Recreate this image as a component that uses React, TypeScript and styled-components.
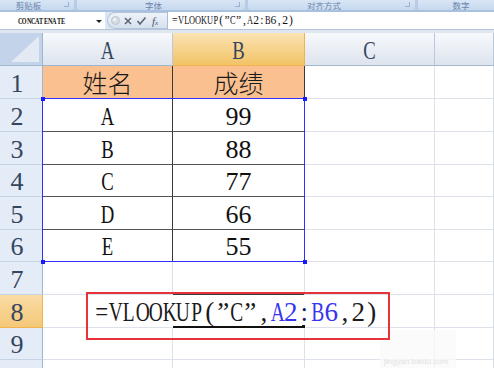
import React from 'react';
import styled, { createGlobalStyle } from 'styled-components';

const GlobalStyle = createGlobalStyle`
  html, body { margin: 0; padding: 0; background: #fff; }
  body { width: 494px; height: 368px; overflow: hidden; font-family: "Liberation Serif", "Noto Sans CJK SC", serif; }
`;

const Page = styled.div`
  position: relative;
  width: 494px;
  height: 368px;
  overflow: hidden;
  display: flex;
  flex-direction: column;
  background: #fff;
  & > * { flex-shrink: 0; }
`;

/* ribbon group captions */
const Ribbon = styled.div`
  display: flex;
  gap: 3px;
  height: 10px;
  background: #b8cce6;
  border-bottom: 2px solid #a9c0de;
  overflow: hidden;
`;
const Group = styled.div<{ $w: number; $ml?: number }>`
  position: relative;
  flex: 0 0 ${(p) => p.$w}px;
  margin-left: ${(p) => p.$ml || 0}px;
  padding-right: 15px;
  box-sizing: border-box;
  display: flex;
  align-items: center;
  justify-content: center;
  background: linear-gradient(#d8e5f5, #c7d9ef);
  border-radius: 0 0 3px 3px;
  font: 8.5px/10px "Noto Sans CJK SC", sans-serif;
  color: #6a84ac;
`;
const Launcher = styled.span`
  position: absolute;
  right: 5px;
  top: 2px;
  width: 4px;
  height: 4px;
  border-right: 1px solid #9cb1cf;
  border-bottom: 1px solid #9cb1cf;
`;

/* formula bar */
const FormulaBar = styled.div`
  display: flex;
  height: 17px;
  background: #dbe6f3;
`;
const NameBox = styled.div`
  position: relative;
  width: 105px;
  background: #fff;
  display: flex;
  align-items: center;
  padding-left: 18px;
  box-sizing: border-box;
  font-size: 8.6px;
  font-weight: bold;
  color: #111;
`;
const Arrow = styled.span`
  position: absolute;
  right: 3px;
  top: 8px;
  border-left: 3px solid transparent;
  border-right: 3px solid transparent;
  border-top: 3px solid #222;
`;
const Pill = styled.div`
  margin-left: 2px;
  width: 60px;
  display: flex;
  align-items: center;
  gap: 3px;
  padding-left: 3px;
  box-sizing: border-box;
  background: linear-gradient(#eef3f9, #d6e1ee);
  border: 1px solid #b3c5dc;
  border-right: none;
  border-radius: 9px 0 0 9px;
`;
const Fx = styled.span`
  font: italic 11px "Liberation Serif", serif;
  color: #4b5766;
  margin-left: 2px;
  small { font-size: 7px; }
`;
const FormulaInput = styled.div`
  flex: 1;
  background: #fff;
  border-left: 1px solid #a9bcd5;
  display: flex;
  align-items: center;
  padding-left: 4px;
  font-size: 11.6px;
  color: #111;
`;
const Band = styled.div`
  height: 4px;
  background: #dfe6ef;
  border-top: 1px solid #b4c5da;
  box-sizing: border-box;
`;

/* sheet */
const heights = [33, 33, 33, 32, 33, 32, 33, 33, 32, 33];

const Sheet = styled.div`
  display: grid;
  grid-template-columns: 43px 130px 132px 130px 1fr;
  grid-template-rows: 33px ${heights.map((h) => h + 'px').join(' ')};
`;
const Corner = styled.div`
  grid-row: 1;
  grid-column: 1;
  position: relative;
  background: #c3d3e9;
  border-right: 1px solid #9eb6ce;
  border-bottom: 1px solid #9eb6ce;
  &::after {
    content: '';
    position: absolute;
    right: 3px;
    bottom: 3px;
    width: 28px;
    height: 26px;
    background: #e3eaf4;
    clip-path: polygon(100% 0, 100% 100%, 0 100%);
  }
`;
const ColHead = styled.div<{ $c: number; $on?: boolean }>`
  grid-row: 1;
  grid-column: ${(p) => p.$c};
  display: flex;
  align-items: center;
  justify-content: center;
  padding-top: 3px;
  box-sizing: border-box;
  font-size: 26px;
  color: #34455e;
  background: ${(p) => (p.$on ? 'linear-gradient(#fbe3b3, #f2c366)' : 'linear-gradient(#f7f9fc, #dde4ee)')};
  border-right: 1px solid ${(p) => (p.$on ? '#f1b34e' : '#b9c8db')};
  border-bottom: 1px solid ${(p) => (p.$on ? '#f1b34e' : '#9eb6ce')};
`;
const RowHead = styled.div<{ $r: number; $on?: boolean }>`
  grid-row: ${(p) => p.$r};
  grid-column: 1;
  display: flex;
  align-items: center;
  justify-content: center;
  padding: 3px 8px 0 0;
  box-sizing: border-box;
  font-size: 26px;
  color: #34455e;
  background: ${(p) => (p.$on ? 'linear-gradient(#fadca6, #f4c878)' : '#e4ecf7')};
  border-right: 1px solid ${(p) => (p.$on ? '#f1b34e' : '#9eb6ce')};
  border-bottom: 1px solid ${(p) => (p.$on ? '#f1b34e' : '#c5d3e5')};
`;
const Cell = styled.div<{ $r: number; $c: number; $bg?: string; $dark?: boolean; $open?: boolean; $sel?: boolean }>`
  grid-row: ${(p) => p.$r};
  grid-column: ${(p) => p.$c};
  position: relative;
  display: flex;
  align-items: center;
  justify-content: center;
  padding-top: 3px;
  box-sizing: border-box;
  font-size: 26px;
  color: #111;
  background: ${(p) => p.$bg || '#fff'};
  border-right: 1px solid ${(p) => (p.$open ? 'transparent' : p.$dark ? '#3a3a3a' : '#dde2ea')};
  border-bottom: 1px solid ${(p) => (p.$dark ? '#555' : '#dde2ea')};
  ${(p) =>
    p.$sel &&
    `
    margin-top: -2px;
    border-top: 2px solid #3d3d3d;
    border-bottom: 2px solid #111;
    &::after {
      content: '';
      position: absolute;
      right: -2px;
      bottom: -3px;
      width: 4px;
      height: 4px;
      background: #111;
    }
  `}
`;
const CnText = styled.span`
  font: 300 25px "Noto Sans CJK SC", sans-serif;
  color: #1a1a1a;
  margin-top: -4px;
`;
const Range = styled.div`
  grid-row: 3 / 8;
  grid-column: 2 / 4;
  position: relative;
  margin: -1px 0 0 -1px;
  border: 1px solid #2f2fff;
  z-index: 2;
  pointer-events: none;
`;
const Handle = styled.span<{ $top: boolean; $left: boolean }>`
  position: absolute;
  width: 4px;
  height: 4px;
  background: #1a1aff;
  ${(p) => (p.$top ? 'top: -2px;' : 'bottom: -3px;')}
  ${(p) => (p.$left ? 'left: -2px;' : 'right: -3px;')}
`;

/* annotation */
const Callout = styled.div`
  position: absolute;
  left: 86px;
  top: 292px;
  width: 304px;
  height: 48px;
  box-sizing: border-box;
  border: 2px solid #e5333a;
  padding-left: 7px;
  font-size: 27px;
  line-height: 36px;
  white-space: nowrap;
  color: #1b1b1b;
  z-index: 3;
`;
const Watermark = styled.div`
  position: absolute;
  left: 380px;
  top: 330px;
  width: 76px;
  height: 38px;
  background: rgba(250, 250, 250, 0.75);
  font: 8px "Liberation Sans", sans-serif;
  color: #e2e2e2;
  display: flex;
  align-items: flex-end;
  padding: 0 0 2px 4px;
  box-sizing: border-box;
`;

/* SimSun-like half width text */
const Run = styled.span<{ $color?: string }>`
  display: inline-flex;
  font-family: "Liberation Serif", serif;
  color: ${(p) => p.$color || 'inherit'};
`;
const Glyph = styled.span<{ $sx: number }>`
  display: inline-flex;
  justify-content: center;
  width: 0.5em;
  transform: scaleX(${(p) => p.$sx});
`;
const squeeze = (ch: string) => (/[A-Z]/.test(ch) ? 0.72 : ch === '=' ? 0.85 : 1);

function Sim({ text, color }: { text: string; color?: string }) {
  return (
    <Run $color={color}>
      {[...text].map((ch, i) => (
        <Glyph key={i} $sx={squeeze(ch)}>
          {ch}
        </Glyph>
      ))}
    </Run>
  );
}

const data = [
  ['姓名', '成绩'],
  ['A', '99'],
  ['B', '88'],
  ['C', '77'],
  ['D', '66'],
  ['E', '55'],
];

function App() {
  return (
    <Page>
      <GlobalStyle />
      <Ribbon>
        <Group $w={76} $ml={-2}>
          剪贴板<Launcher />
        </Group>
        <Group $w={168}>
          字体<Launcher />
        </Group>
        <Group $w={167}>
          对齐方式<Launcher />
        </Group>
        <Group $w={101}>
          数字<Launcher />
        </Group>
      </Ribbon>

      <FormulaBar>
        <NameBox>
          <Sim text="CONCATENATE" />
          <Arrow />
        </NameBox>
        <Pill>
          <svg width="9" height="9" viewBox="0 0 9 9">
            <circle cx="4.5" cy="4.5" r="4" fill="#d5dbe3" stroke="#bcc5d1" />
            <circle cx="3.5" cy="3.5" r="1.5" fill="#f4f6f9" />
          </svg>
          <svg width="10" height="10" viewBox="0 0 10 10">
            <path d="M2 2 L8 8 M8 2 L2 8" stroke="#5d6775" strokeWidth="1.6" />
          </svg>
          <svg width="11" height="10" viewBox="0 0 11 10">
            <path d="M1.5 5 L4 8 L9.5 1.5" stroke="#5d6775" strokeWidth="1.6" fill="none" />
          </svg>
          <Fx>
            f<small>x</small>
          </Fx>
        </Pill>
        <FormulaInput>
          <Sim text={'=VLOOKUP(\u201dC\u201d,A2:B6,2)'} />
        </FormulaInput>
      </FormulaBar>
      <Band />

      <Sheet>
        <Corner />
        <ColHead $c={2}>
          <Sim text="A" />
        </ColHead>
        <ColHead $c={3} $on>
          <Sim text="B" />
        </ColHead>
        <ColHead $c={4}>
          <Sim text="C" />
        </ColHead>
        <ColHead $c={5} />

        {heights.map((_, i) => {
          const n = i + 1;
          const r = n + 1;
          const row = data[i];
          return (
            <React.Fragment key={n}>
              <RowHead $r={r} $on={n === 8}>
                {n}
              </RowHead>
              <Cell $r={r} $c={2} $dark={!!row} $bg={n === 1 ? '#fac090' : undefined} $open={n === 8}>
                {row && (n === 1 ? <CnText>{row[0]}</CnText> : <Sim text={row[0]} />)}
              </Cell>
              <Cell $r={r} $c={3} $dark={!!row} $bg={n === 1 ? '#fac090' : undefined} $open={n === 8} $sel={n === 8}>
                {row && (n === 1 ? <CnText>{row[1]}</CnText> : <Sim text={row[1]} />)}
              </Cell>
              <Cell $r={r} $c={4} />
              <Cell $r={r} $c={5} />
            </React.Fragment>
          );
        })}

        <Range>
          <Handle $top $left />
          <Handle $top $left={false} />
          <Handle $top={false} $left />
          <Handle $top={false} $left={false} />
        </Range>
      </Sheet>

      <Callout>
        <Sim text={'=VLOOKUP(\u201dC\u201d,'} />
        <Sim text="A2" color="#3535f0" />
        <Sim text=":" color="#1d1d6a" />
        <Sim text="B6" color="#3535f0" />
        <Sim text=",2)" />
      </Callout>
      <Watermark>jingyan.baidu.com</Watermark>
    </Page>
  );
}

export default App;
